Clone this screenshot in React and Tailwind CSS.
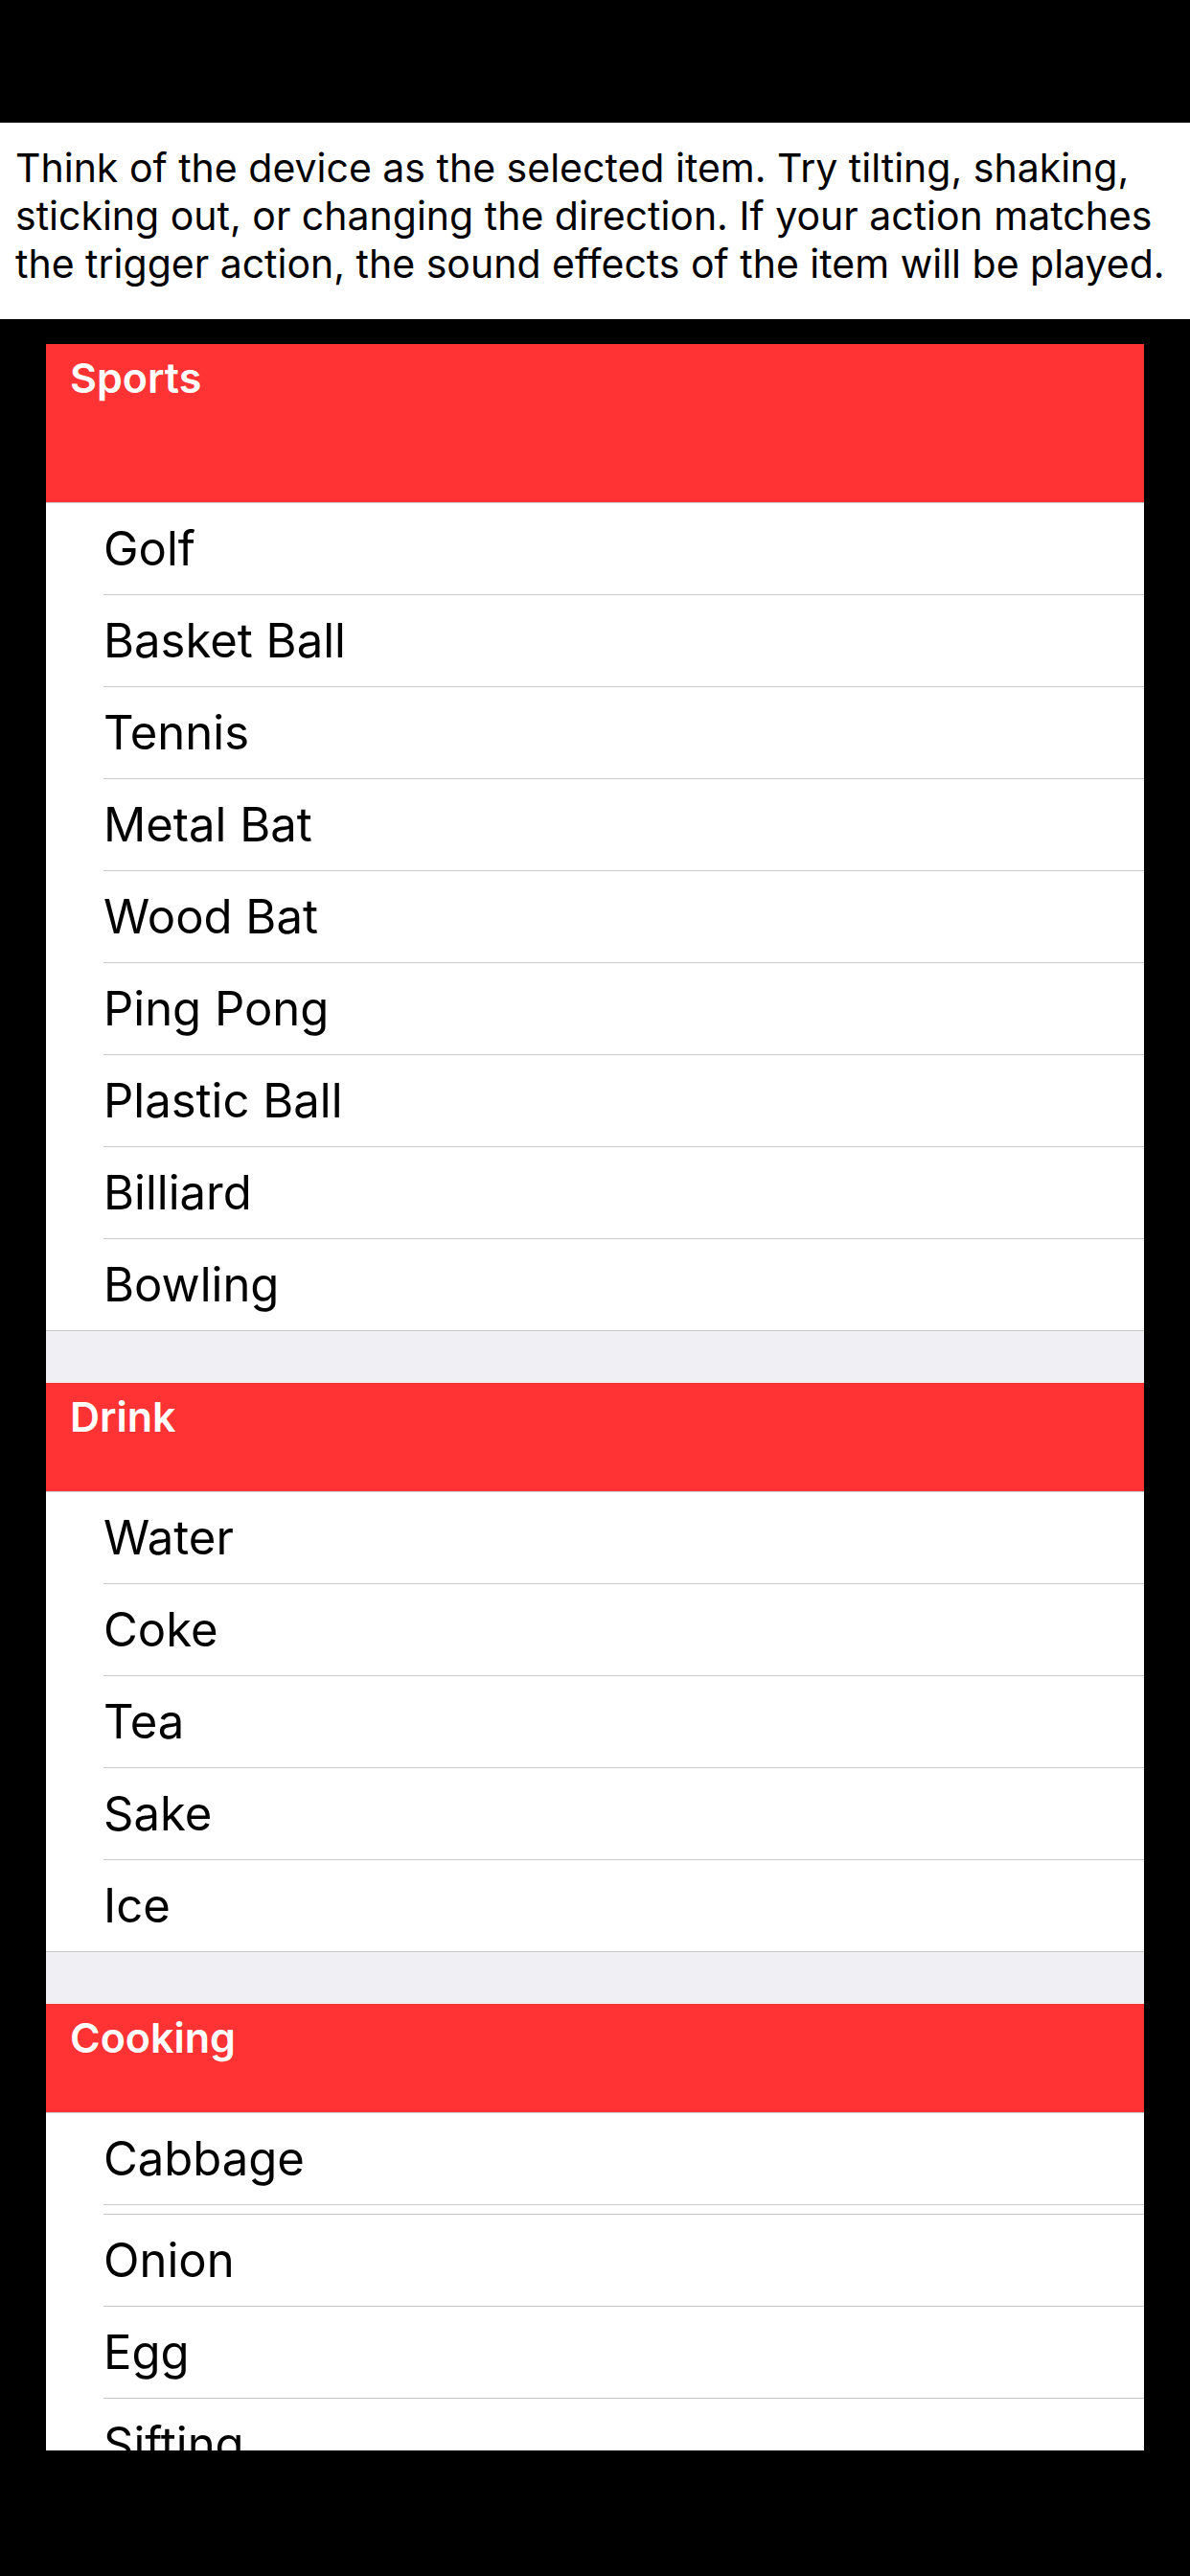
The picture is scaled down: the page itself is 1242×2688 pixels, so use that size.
import React from "react";

const SEP = "border-[#c8c7cc]";

function Row({ label, last }) {
  if (last) {
    return (
      <div className={`h-[96px] pl-[60px] border-b ${SEP} flex items-center`}>
        <span className="text-[49px] text-black">{label}</span>
      </div>
    );
  }
  return (
    <div className="h-[96px] pl-[60px]">
      <div className={`h-full border-b ${SEP} flex items-center`}>
        <span className="text-[49px] text-black">{label}</span>
      </div>
    </div>
  );
}

function Header({ title, tall }) {
  return (
    <div
      className={`${tall ? "h-[166px]" : "h-[114px]"} bg-[#ff3333] px-[25px] pt-[13px] border-b ${SEP}`}
    >
      <div className="text-[43px] leading-[44px] font-semibold text-white">{title}</div>
    </div>
  );
}

export default function App() {
  const sports = ["Golf", "Basket Ball", "Tennis", "Metal Bat", "Wood Bat", "Ping Pong", "Plastic Ball", "Billiard", "Bowling"];
  const drink = ["Water", "Coke", "Tea", "Sake", "Ice"];
  return (
    <div className="w-[1242px] h-[2688px] bg-black overflow-hidden flex flex-col [font-family:Inter,'Noto_Sans',sans-serif]">
      <div className="h-[128px] shrink-0" />
      <div className="h-[205px] shrink-0 bg-white pl-[16px] pr-[4px] pt-[22px] text-[41px] leading-[50px] text-black">
        Think of the device as the selected item. Try tilting, shaking, sticking out, or changing the direction. If your action matches the trigger action, the sound effects of the item will be played.
      </div>
      <div className="h-[26px] shrink-0" />
      <div className="mx-[48px] h-[2198px] shrink-0 overflow-hidden bg-white">
        <Header title="Sports" tall />
        {sports.map((s, i) => (
          <Row key={s} label={s} last={i === sports.length - 1} />
        ))}
        <div className="h-[54px] bg-[#efeff4]" />
        <Header title="Drink" />
        {drink.map((s, i) => (
          <Row key={s} label={s} last={i === drink.length - 1} />
        ))}
        <div className="h-[54px] bg-[#efeff4]" />
        <Header title="Cooking" />
        <Row label="Cabbage" />
        <div className="h-[10px] pl-[60px]">
          <div className={`h-full border-b ${SEP}`} />
        </div>
        <Row label="Onion" />
        <Row label="Egg" />
        <Row label="Sifting" />
      </div>
    </div>
  );
}
